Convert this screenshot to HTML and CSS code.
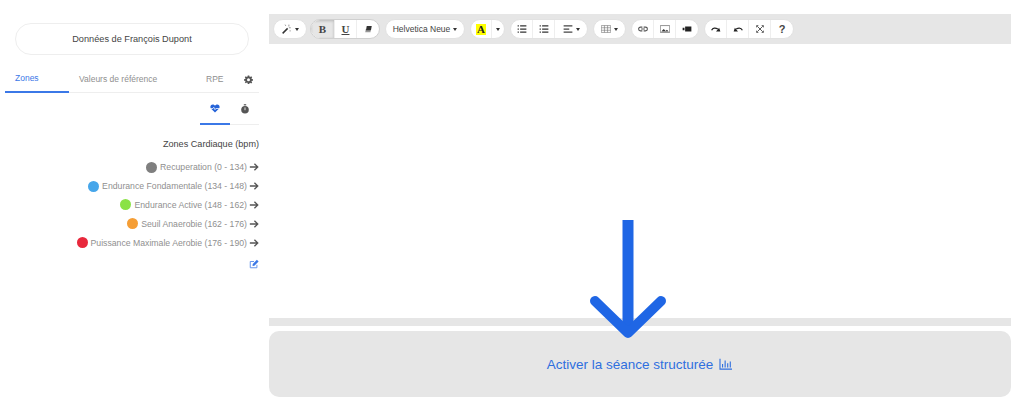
FILE: index.html
```html
<!DOCTYPE html>
<html lang="fr">
<head>
    <meta charset="UTF-8">
    <title>Séance structurée</title>
    <link rel="stylesheet" href="styles.css">
</head>
<body>

<div class="page">
    <!-- Colonne de gauche -->
    <div class="sidebar">
        <div class="athlete-btn">Données de François Dupont</div>

        <div class="tabs">
            <div class="tab tab-zones active">Zones</div>
            <div class="tab tab-ref">Valeurs de référence</div>
            <div class="tab tab-rpe">RPE</div>
            <div class="tab tab-gear">
                <svg class="icon-gear" viewBox="0 0 24 24"><path fill="#555" fill-rule="evenodd" d="M10 1h4l.6 3.2 1.8.8L19.100 3.100l2.800 2.800L20 8.600l.8 1.800L24 11v4l-3.200.4-.8 1.900 1.900 2.700-2.800 2.800-2.700-1.900-1.800.8L14 24h-4l-.6-3.200-1.800-.8-2.700 1.900-2.800-2.800L4 17.300l-.8-1.900L0 15v-4l3.200-.6.800-1.800-1.900-2.700 2.800-2.800L7.600 5l1.800-.8zM12 8.500a4 4 0 1 0 0 8 4 4 0 0 0 0-8z"/></svg>
            </div>
        </div>

        <div class="subtabs">
            <div class="subtab active">
                <svg class="icon-heart" viewBox="0 0 24 22"><path fill="#2563d8" d="M12 21 2.500 11.500C-1 8 1 1 6.500 1 9 1 11 2.500 12 4c1-1.500 3-3 5.500-3C23 1 25 8 21.500 11.500z"/><path fill="none" stroke="#fff" stroke-width="1.800" d="M1 11h6l2-3 3 6 2-3h9"/></svg>
            </div>
            <div class="subtab">
                <svg class="icon-watch" viewBox="0 0 20 24"><rect x="7" y="0" width="6" height="3" fill="#555"/><circle cx="10" cy="14" r="9.500" fill="#555"/><rect x="9" y="8" width="2" height="7" fill="#fff"/></svg>
            </div>
        </div>

        <div class="zones-title">Zones Cardiaque (bpm)</div>
        <div class="zone-row"><span class="dot dot-grey"></span><span class="zone-label">Recuperation (0 - 134)</span><svg class="zone-arrow" viewBox="0 0 12 12"><path fill="none" stroke="#555" stroke-width="1.600" d="M1 6h9M6.500 2l4 4-4 4"/></svg></div>
        <div class="zone-row"><span class="dot dot-blue"></span><span class="zone-label">Endurance Fondamentale (134 - 148)</span><svg class="zone-arrow" viewBox="0 0 12 12"><path fill="none" stroke="#555" stroke-width="1.600" d="M1 6h9M6.500 2l4 4-4 4"/></svg></div>
        <div class="zone-row"><span class="dot dot-green"></span><span class="zone-label">Endurance Active (148 - 162)</span><svg class="zone-arrow" viewBox="0 0 12 12"><path fill="none" stroke="#555" stroke-width="1.600" d="M1 6h9M6.500 2l4 4-4 4"/></svg></div>
        <div class="zone-row"><span class="dot dot-orange"></span><span class="zone-label">Seuil Anaerobie (162 - 176)</span><svg class="zone-arrow" viewBox="0 0 12 12"><path fill="none" stroke="#555" stroke-width="1.600" d="M1 6h9M6.500 2l4 4-4 4"/></svg></div>
        <div class="zone-row"><span class="dot dot-red"></span><span class="zone-label">Puissance Maximale Aerobie (176 - 190)</span><svg class="zone-arrow" viewBox="0 0 12 12"><path fill="none" stroke="#555" stroke-width="1.600" d="M1 6h9M6.500 2l4 4-4 4"/></svg></div>
        <div class="zone-edit">
            <svg class="icon-edit" viewBox="0 0 24 24"><path fill="none" stroke="#5a8dea" stroke-width="2.200" d="M19 14v7H3V6h9"/><path fill="#3b78e7" d="M9 12 19 2l4 4-10 10-4.500.5z"/></svg>
        </div>
    </div>

    <!-- Editeur -->
    <div class="main">
        <div class="editor">
            <div class="toolbar">
                <div class="btn-group"><div class="tb-btn w-wand"><svg class="ic" viewBox="0 0 16 16"><path stroke="#333" stroke-width="2.400" d="M1 15 9 7"/><path stroke="#777" stroke-width="1.200" d="M11 1v3M14 6h-3M14 11h-2M6 3 5 1"/></svg><span class="caret"></span></div></div>
                <div class="btn-group group-style"><div class="tb-btn pressed w-b serif">B</div><div class="tb-btn w-u serif under">U</div><div class="tb-btn w-e"><svg class="ic" viewBox="0 0 16 16"><path fill="#999" d="M4.500 8h8L12 13H3.500z"/><path fill="#333" d="M6 3h8l-1.300 7H4.800z"/></svg></div></div>
                <div class="btn-group"><div class="tb-btn w-font">Helvetica Neue<span class="caret"></span></div></div>
                <div class="btn-group"><div class="tb-btn w-color"><span class="color-a">A</span></div><div class="tb-btn w-caret"><span class="caret"></span></div></div>
                <div class="btn-group">
                    <div class="tb-btn w-ic"><svg class="ic" viewBox="0 0 16 16"><path stroke="#333" stroke-width="2" d="M1 3h2M5 3h10M1 8h2M5 8h10M1 13h2M5 13h10"/></svg></div>
                    <div class="tb-btn w-ic"><svg class="ic" viewBox="0 0 16 16"><path stroke="#333" stroke-width="2" d="M1 3h2M5 3h10M1 8h2M5 8h10M1 13h2M5 13h10"/></svg></div>
                    <div class="tb-btn w-align"><svg class="ic" viewBox="0 0 16 16"><path stroke="#444" stroke-width="2" d="M1 3h14M1 8h9M1 13h14"/></svg><span class="caret"></span></div>
                </div>
                <div class="btn-group"><div class="tb-btn w-table"><svg class="ic" viewBox="0 0 16 16"><path fill="none" stroke="#777" d="M.5 2.500h15v11H.5zM.5 6h15M.5 10h15M5.500 2.500v11M10.500 2.500v11"/></svg><span class="caret"></span></div></div>
                <div class="btn-group">
                    <div class="tb-btn w-ic"><svg class="ic" viewBox="0 0 16 16"><path fill="none" stroke="#555" stroke-width="1.800" d="M7 5H4a3 3 0 0 0 0 6h3M9 5h3a3 3 0 0 1 0 6H9M5 8h6"/></svg></div>
                    <div class="tb-btn w-ic"><svg class="ic" viewBox="0 0 16 16"><path fill="none" stroke="#555" d="M.5 2.500h15v11H.5z"/><path fill="#333" d="M2 12l4-4 3 3 2-2 3 3z"/></svg></div>
                    <div class="tb-btn w-ic"><svg class="ic" viewBox="0 0 16 16"><path fill="#222" d="M5 4h10v8H5zM1 6h3v4H1z"/></svg></div>
                </div>
                <div class="btn-group">
                    <div class="tb-btn w-ic"><svg class="ic" viewBox="0 0 16 16"><path fill="none" stroke="#222" stroke-width="2" d="M1 10c2-4 6-4 10-2"/><path fill="#222" d="M15 12H8l5-6z"/></svg></div>
                    <div class="tb-btn w-ic"><svg class="ic" viewBox="0 0 16 16"><path fill="none" stroke="#222" stroke-width="2" d="M15 10c-2-4-6-4-10-2"/><path fill="#222" d="M1 12h7L3 6z"/></svg></div>
                    <div class="tb-btn w-ic"><svg class="ic" viewBox="0 0 16 16"><path stroke="#444" stroke-width="1.400" d="M4 4l8 8M12 4l-8 8"/><path fill="#444" d="M2 2h4L2 6zM14 2v4l-4-4zM2 14v-4l4 4zM14 14h-4l4-4z"/></svg></div>
                    <div class="tb-btn w-ic help">?</div>
                </div>
            </div>
            <div class="editor-body"></div>
            <div class="editor-resize"></div>
        </div>
        <div class="activate-panel">
            <span>Activer la séance structurée</span>
            <svg class="icon-chart" viewBox="0 0 16 14"><path fill="none" stroke="#2f6fdf" stroke-width="1.300" d="M1 1v12h14M4 11V7M7 11V3M10 11V6M13 11V4"/></svg>
        </div>
    </div>
</div>

<svg class="big-arrow" viewBox="0 0 80 122"><path fill="none" stroke="#1f66e5" stroke-width="11" d="M40 1v112"/><path fill="none" stroke="#1f66e5" stroke-width="10" stroke-linecap="round" stroke-linejoin="round" d="M7 82l33 32 33-32"/></svg>

</body>
</html>
```

FILE: styles.css
```css
* {
    box-sizing: border-box;
}
body {
    margin: 0;
    height: 407px;
    overflow: hidden;
    background-color: #fff;
    font-family: "Liberation Sans", Arial, sans-serif;
    color: #333;
    position: relative;
}
.page {
    display: flex;
    gap: 10px;
    padding: 14px 13px 0 5px;
}

/* Sidebar */
.sidebar {
    width: 254px;
    flex-shrink: 0;
    font-size: 8.700px;
    color: #8f8f8f;
}
.athlete-btn {
    width: 234px;
    height: 32px;
    margin: 9px 0 0 10px;
    border: 1px solid #eee;
    border-radius: 16px;
    display: flex;
    align-items: center;
    justify-content: center;
    color: #444;
    font-size: 9.200px;
}
.tabs {
    display: flex;
    height: 28px;
    margin-top: 10px;
    border-bottom: 1px solid #eee;
    font-size: 8.500px;
}
.tab {
    display: flex;
    align-items: center;
    height: 28px;
}
.tab-zones {
    width: 64px;
    padding-left: 10px;
    color: #3b78e7;
    border-bottom: 2px solid #3b78e7;
}
.tab-ref {
    width: 127px;
    padding-left: 10px;
}
.tab-rpe {
    width: 39px;
    padding-left: 10px;
}
.tab-gear {
    padding-left: 9px;
}
.icon-gear {
    width: 9px;
    height: 9px;
}
.subtabs {
    display: flex;
    justify-content: flex-end;
    height: 32px;
}
.subtab {
    width: 29px;
    height: 32px;
    display: flex;
    align-items: center;
    justify-content: center;
    border-bottom: 1px solid #eee;
}
.subtab.active {
    width: 30px;
    border-bottom: 2px solid #3b78e7;
}
.icon-heart {
    width: 10px;
    height: 9px;
}
.icon-watch {
    width: 8px;
    height: 10px;
}
.zones-title {
    text-align: right;
    margin-top: 14px;
    height: 19px;
    color: #444;
    font-size: 9.100px;
    line-height: 11px;
}
.zone-row {
    display: flex;
    align-items: center;
    justify-content: flex-end;
    height: 18.800px;
}
.dot {
    width: 11px;
    height: 11px;
    border-radius: 50%;
    margin-right: 3px;
}
.dot-grey { background-color: #7f7f7f; }
.dot-blue { background-color: #46a6ea; }
.dot-green { background-color: #8ae245; }
.dot-orange { background-color: #f59e35; }
.dot-red { background-color: #e8283c; }
.zone-arrow {
    width: 10px;
    height: 10px;
    margin-left: 2px;
}
.zone-edit {
    display: flex;
    justify-content: flex-end;
    margin-top: 7px;
}
.icon-edit {
    width: 10px;
    height: 10px;
}

/* Editeur */
.main {
    flex: 1;
}
.editor {
    background-color: #e6e6e6;
    height: 312px;
    display: flex;
    flex-direction: column;
}
.toolbar {
    height: 30px;
    display: flex;
    align-items: center;
    gap: 5px;
    padding-left: 4px;
}
.editor-body {
    height: 274px;
    background-color: #fff;
}
.btn-group {
    display: flex;
    height: 20px;
    border-radius: 10px;
    overflow: hidden;
    background-color: #fff;
    border: 1px solid #e2e2e2;
}
.group-style {
    margin-left: -2px;
    border-color: #d0d0d0;
}
.tb-btn {
    display: flex;
    align-items: center;
    justify-content: center;
    height: 100%;
    font-size: 8.500px;
    color: #444;
    border-right: 1px solid #eee;
}
.tb-btn:last-child {
    border-right: 0;
}
.pressed {
    background-color: #e6e6e6;
    box-shadow: inset 0 1px 3px rgba(0, 0, 0, 0.2);
}
.serif {
    font-family: "Liberation Serif", serif;
    font-weight: bold;
    font-size: 11px;
}
.under {
    text-decoration: underline;
}
.ic {
    width: 10px;
    height: 10px;
}
.caret {
    width: 0;
    height: 0;
    margin-left: 3px;
    border-left: 2px solid transparent;
    border-right: 2px solid transparent;
    border-top: 3px solid #333;
}
.w-wand { width: 32px; }
.w-b { width: 24px; }
.w-u { width: 22px; }
.w-e { width: 22px; }
.w-font { width: 78px; }
.w-color { width: 21px; }
.w-caret { width: 12px; }
.w-caret .caret { margin-left: 0; }
.w-ic { width: 22px; }
.w-align { width: 32px; }
.w-table { width: 31px; }
.color-a {
    background-color: #ff0;
    color: #222;
    font-family: "Liberation Serif", serif;
    font-weight: bold;
    font-size: 11px;
    line-height: 11px;
    padding: 0 1px;
}
.help {
    font-weight: bold;
    font-size: 11px;
}
.editor-resize {
    height: 8px;
}
.activate-panel {
    height: 66px;
    margin-top: 5px;
    background-color: #e6e6e6;
    border-radius: 10px;
    display: flex;
    align-items: center;
    justify-content: center;
    gap: 6px;
    font-size: 13.500px;
    color: #2f6fdf;
}
.icon-chart {
    width: 14px;
    height: 12px;
}

/* Fleche par dessus */
.big-arrow {
    position: absolute;
    left: 588px;
    top: 219px;
    width: 80px;
    height: 122px;
}
```
